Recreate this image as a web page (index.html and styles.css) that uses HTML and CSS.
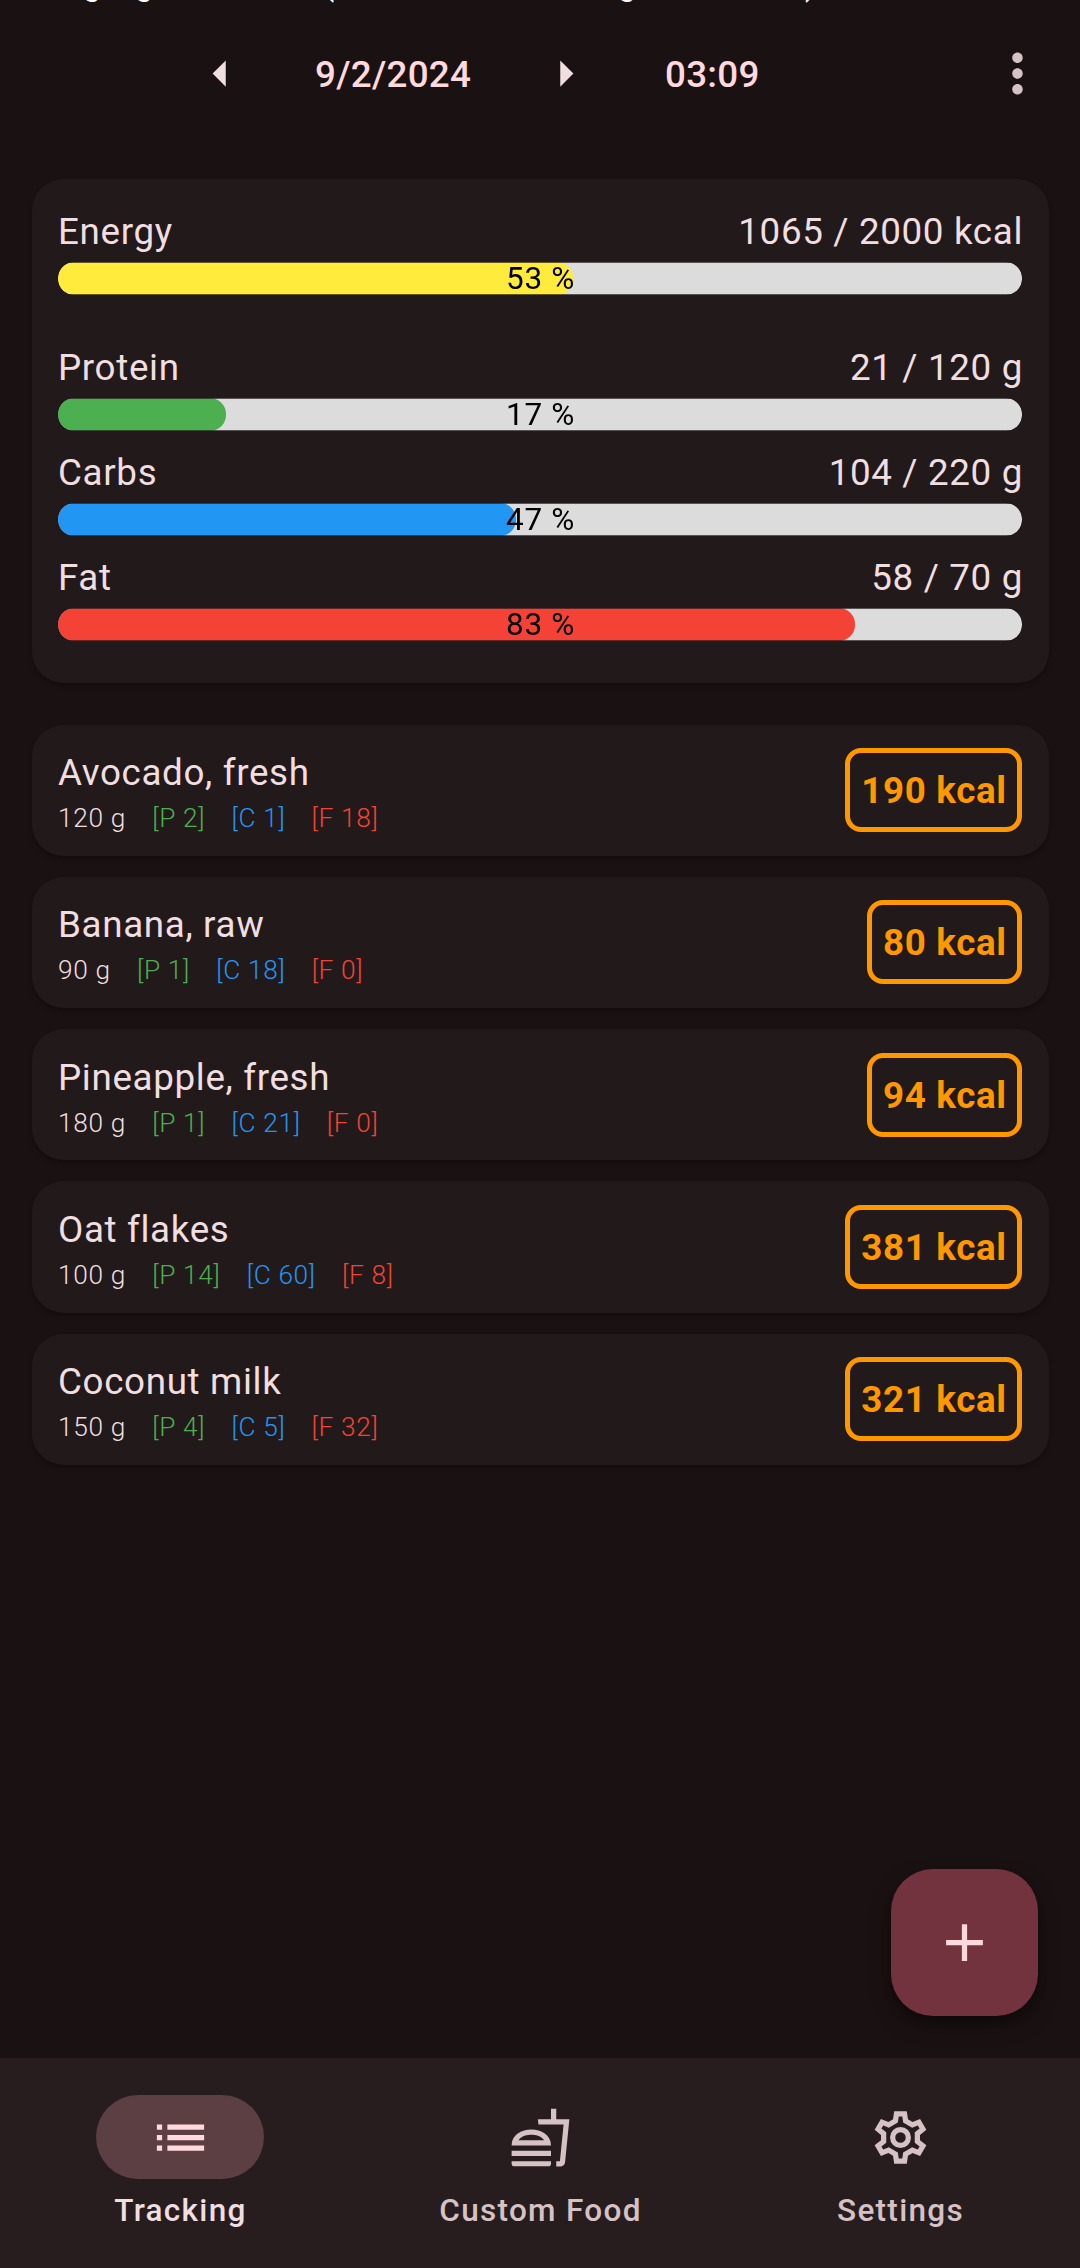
FILE: index.html
```html
<!DOCTYPE html>
<html lang="en">
<head>
<meta charset="utf-8">
<title>Tracking</title>
<link rel="stylesheet" href="styles.css">
</head>
<body>
<div class="app">
  <div class="overscroll" aria-hidden="true"><span class="o1">g</span><span class="o2">g</span><span class="o3">(</span><span class="o4">g</span><span class="o5">)</span></div>
  <header class="toolbar">
    <svg class="icon prev" viewBox="0 0 24 24"><path d="M14 7l-5 5 5 5V7z"/></svg>
    <span class="date">9/2/2024</span>
    <svg class="icon next" viewBox="0 0 24 24"><path d="M10 17l5-5-5-5v10z"/></svg>
    <span class="time">03:09</span>
    <svg class="icon more" viewBox="0 0 24 24"><path d="M12 8c1.1 0 2-.9 2-2s-.9-2-2-2-2 .9-2 2 .9 2 2 2zm0 2c-1.1 0-2 .9-2 2s.9 2 2 2 2-.9 2-2-.9-2-2-2zm0 6c-1.1 0-2 .9-2 2s.9 2 2 2 2-.9 2-2-.9-2-2-2z"/></svg>
  </header>

  <main class="content">
    <section class="card summary">
      <div class="meter energy">
        <div class="meter-head"><span>Energy</span><span class="amount">1065 / 2000 kcal</span></div>
        <div class="track"><div class="fill" style="width:53.4%"></div><span class="pct">53 %</span></div>
      </div>
      <div class="meter protein">
        <div class="meter-head"><span>Protein</span><span class="amount">21 / 120 g</span></div>
        <div class="track"><div class="fill" style="width:17.4%"></div><span class="pct">17 %</span></div>
      </div>
      <div class="meter carbs">
        <div class="meter-head"><span>Carbs</span><span class="amount">104 / 220 g</span></div>
        <div class="track"><div class="fill" style="width:47.5%"></div><span class="pct">47 %</span></div>
      </div>
      <div class="meter fat">
        <div class="meter-head"><span>Fat</span><span class="amount">58 / 70 g</span></div>
        <div class="track"><div class="fill" style="width:82.7%"></div><span class="pct">83 %</span></div>
      </div>
    </section>

    <section class="foods">
      <article class="card food">
        <div class="info"><div class="name">Avocado, fresh</div><div class="macros"><span>120 g</span><span class="p">[P 2]</span><span class="c">[C 1]</span><span class="f">[F 18]</span></div></div>
        <div class="kcal">190 kcal</div>
      </article>
      <article class="card food">
        <div class="info"><div class="name">Banana, raw</div><div class="macros"><span>90 g</span><span class="p">[P 1]</span><span class="c">[C 18]</span><span class="f">[F 0]</span></div></div>
        <div class="kcal">80 kcal</div>
      </article>
      <article class="card food">
        <div class="info"><div class="name">Pineapple, fresh</div><div class="macros"><span>180 g</span><span class="p">[P 1]</span><span class="c">[C 21]</span><span class="f">[F 0]</span></div></div>
        <div class="kcal">94 kcal</div>
      </article>
      <article class="card food">
        <div class="info"><div class="name">Oat flakes</div><div class="macros"><span>100 g</span><span class="p">[P 14]</span><span class="c">[C 60]</span><span class="f">[F 8]</span></div></div>
        <div class="kcal">381 kcal</div>
      </article>
      <article class="card food">
        <div class="info"><div class="name">Coconut milk</div><div class="macros"><span>150 g</span><span class="p">[P 4]</span><span class="c">[C 5]</span><span class="f">[F 32]</span></div></div>
        <div class="kcal">321 kcal</div>
      </article>
    </section>
  </main>

  <button class="fab" aria-label="Add"><svg class="icon" viewBox="0 0 24 24"><path d="M19 13h-6v6h-2v-6H5v-2h6V5h2v6h6v2z"/></svg></button>

  <nav class="nav">
    <a class="tab active">
      <span class="pill"><svg class="icon" viewBox="0 0 24 24"><path d="M3 13h2v-2H3v2zm0 4h2v-2H3v2zm0-8h2V7H3v2zm4 4h14v-2H7v2zm0 4h14v-2H7v2zM7 7v2h14V7H7z"/></svg></span>
      <span class="label">Tracking</span>
    </a>
    <a class="tab">
      <span class="pill"><svg class="icon" viewBox="0 0 24 24"><path d="M1 21.98c0 .56.45 1.01 1.01 1.01H15c.56 0 1.01-.45 1.01-1.01V21H1v.98zM8.5 8.99C4.75 8.99 1 11 1 15h15c0-4-3.75-6.01-7.5-6.01zM3.62 13c1.11-1.55 3.47-2.01 4.88-2.01s3.77.46 4.88 2.01H3.62zM1 17h15v2H1zM18 5V1h-2v4h-5l.23 2h9.56l-1.4 14H18v2h1.72c.84 0 1.53-.65 1.63-1.47L23 5h-5z"/></svg></span>
      <span class="label">Custom Food</span>
    </a>
    <a class="tab">
      <span class="pill"><svg class="icon gear" viewBox="-12 -12 24 24">
        <clipPath id="gear-clip"><path d="M-2.85-6.94L-2.4-10H2.4L2.85-6.94 4.59-5.94 7.46-7.08 9.86-2.92 7.43-1V1L9.86 2.92 7.46 7.08 4.59 5.94 2.85 6.94 2.4 10H-2.4L-2.85 6.94-4.59 5.94-7.46 7.08-9.86 2.92-7.43 1V-1L-9.86-2.92-7.46-7.08-4.59-5.94z"/></clipPath>
        <path clip-path="url(#gear-clip)" stroke-width="4" d="M-2.85-6.94L-2.4-10H2.4L2.85-6.94 4.59-5.94 7.46-7.08 9.86-2.92 7.43-1V1L9.86 2.92 7.46 7.08 4.59 5.94 2.85 6.94 2.4 10H-2.4L-2.85 6.94-4.59 5.94-7.46 7.08-9.86 2.92-7.43 1V-1L-9.86-2.92-7.46-7.08-4.59-5.94z"/>
        <circle r="3" stroke-width="2"/>
      </svg></span>
      <span class="label">Settings</span>
    </a>
  </nav>
</div>
</body>
</html>
```

FILE: styles.css
```css
* { box-sizing: border-box; }

body {
  margin: 0;
  background: #1a1112;
  color: #f0dee0;
  font-family: Roboto, sans-serif;
  font-size: 36.75px;
  letter-spacing: 0.66px;
}

.app {
  position: relative;
  display: flex;
  flex-direction: column;
  width: 1080px;
  height: 2268px;
  overflow: hidden;
}

.icon {
  display: block;
  flex: none;
  width: 63px;
  height: 63px;
  fill: currentColor;
}

/* tail of the line scrolled off above the toolbar */
.overscroll {
  position: absolute;
  inset: 0 0 auto 0;
  height: 3px;
  overflow: hidden;
  color: #fff;
  font-size: 33px;
}
.overscroll span {
  position: absolute;
  bottom: 0;
  line-height: 38px;
}
.o1 { left: 83px; }
.o2 { left: 135px; }
.o3 { left: 323px; }
.o4 { left: 618px; }
.o5 { left: 805px; }

.toolbar {
  display: flex;
  align-items: center;
  height: 147px;
  padding: 0 31.5px 0 189px;
  flex: none;
}
.date, .time {
  padding-top: 2px;
  color: #ffd9dd;
  font-weight: 500;
  letter-spacing: 0.26px;
}
.date { margin-left: 63px; width: 157px; }
.next { margin-left: 62px; }
.time { margin-left: 68px; }
.more {
  margin-left: auto;
  color: #d6c2c4;
}

.content {
  display: flex;
  flex-direction: column;
  gap: 42px;
  flex: 1;
  padding: 31.5px 31.5px 0 31.75px;
}

.card {
  background: #22191a;
  border-radius: 31.5px;
  box-shadow: 0 3px 4px rgba(0, 0, 0, 0.25);
}

.summary {
  display: flex;
  flex-direction: column;
  height: 504px;
  padding: 28.5px 26.25px 0;
}
.meter { height: 105px; }
.energy { height: 136px; }
.meter-head {
  display: flex;
  justify-content: space-between;
  height: 55px;
  line-height: 50px;
}
.amount { margin-right: -0.75px; }
.track {
  position: relative;
  height: 33px;
  overflow: hidden;
  border-radius: 16px;
  background: #dcdcdc;
  mask: linear-gradient(rgba(0, 0, 0, 0.3) 1px, #000 1px, #000 32px, rgba(0, 0, 0, 0.3) 32px);
}
.fill {
  height: 100%;
  border-radius: 16px;
}
.pct {
  position: absolute;
  inset: 0;
  padding-left: 0.75px;
  color: #000;
  font-size: 31.5px;
  line-height: 33px;
  text-align: center;
}
.energy .fill { background: #ffeb3b; }
.protein .fill { background: #4caf50; }
.carbs .fill { background: #2196f3; }
.fat .fill { background: #f44336; }

.foods {
  display: flex;
  flex-direction: column;
  gap: 21px;
}
.food {
  display: flex;
  align-items: center;
  justify-content: space-between;
  height: 131.25px;
  padding: 0 26.25px;
}
.info { padding-top: 6px; }
.name { line-height: 50px; }
.macros {
  display: flex;
  gap: 26.25px;
  font-size: 26.25px;
  font-weight: 300;
  line-height: 40px;
}
.p { color: #4caf50; }
.c { color: #2196f3; }
.f { color: #f44336; }
.kcal {
  height: 84px;
  padding: 1px 10.5px 0 11.5px;
  border: 5px solid #ff9800;
  border-radius: 16px;
  color: #ff9800;
  font-weight: 700;
  line-height: 74px;
}

.fab {
  position: absolute;
  right: 42px;
  bottom: 252px;
  display: grid;
  place-items: center;
  width: 147px;
  height: 147px;
  padding: 0;
  border: 0;
  border-radius: 42px;
  background: #72333f;
  color: #ffd9dd;
  box-shadow: 0 10px 22px rgba(0, 0, 0, 0.3), 0 5px 8px rgba(0, 0, 0, 0.2);
}

.nav {
  display: grid;
  grid-template-columns: repeat(3, 1fr);
  flex: none;
  height: 210px;
  padding-top: 37px;
  background: #271d1e;
}
.tab {
  display: flex;
  flex-direction: column;
  align-items: center;
  gap: 11px;
  color: #d6c2c4;
  font-size: 31.5px;
  font-weight: 500;
  line-height: 42px;
  letter-spacing: 1.3px;
}
.label { margin-right: -1px; }
.pill {
  display: grid;
  place-items: center;
  width: 168px;
  height: 84px;
  border-radius: 42px;
}
.gear {
  fill: none;
  stroke: currentColor;
}
.active { color: #f0dee0; }
.active .pill { background: #5c3f43; color: #ffd9dd; }
```
